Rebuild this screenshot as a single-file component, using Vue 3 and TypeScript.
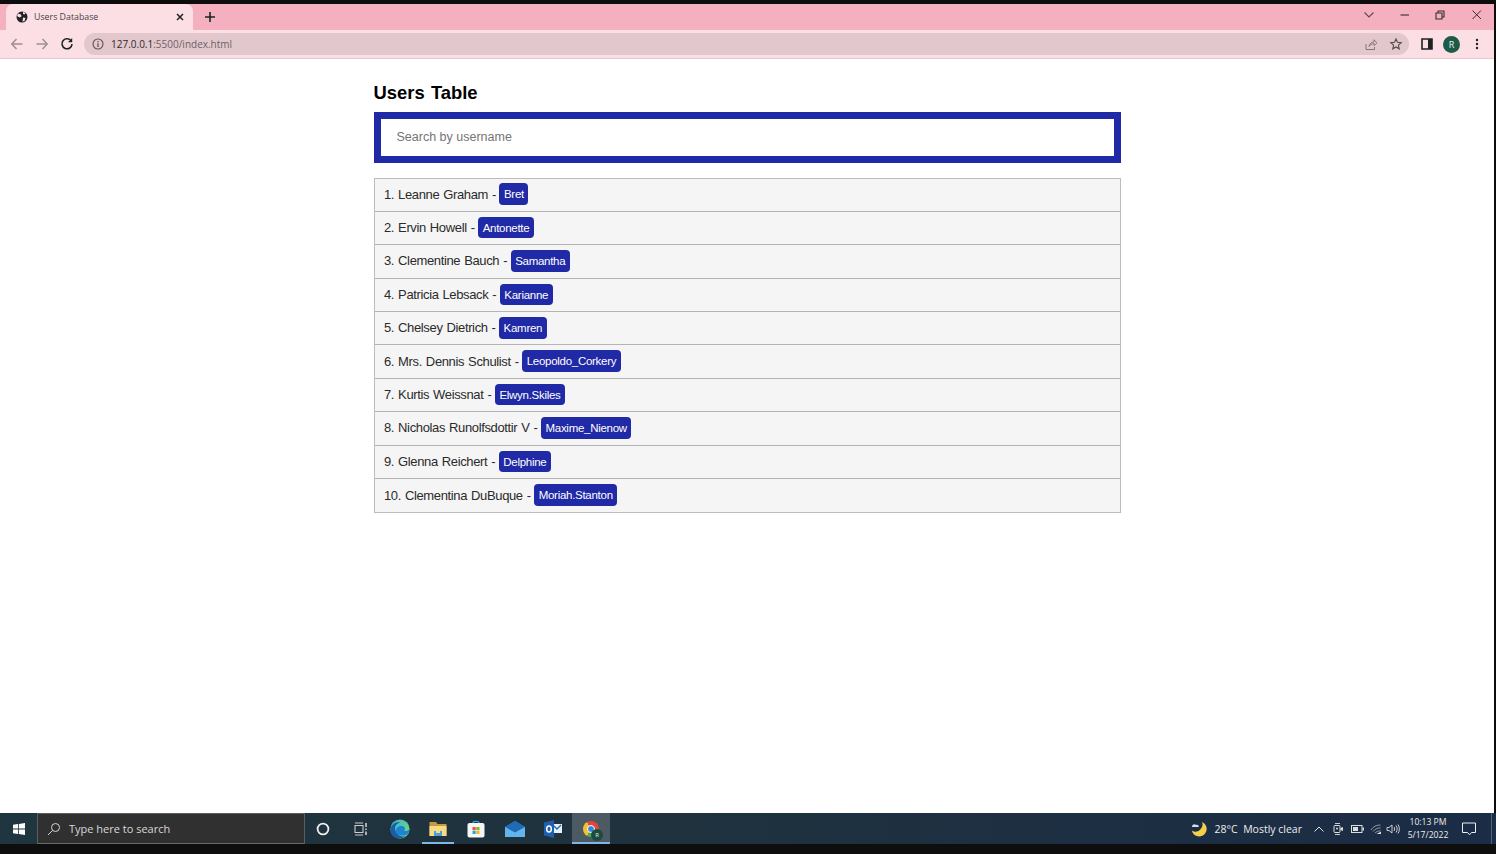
<script setup lang="ts">
interface User {
  name: string;
  username: string;
}

const users: User[] = [
  { name: "Leanne Graham", username: "Bret" },
  { name: "Ervin Howell", username: "Antonette" },
  { name: "Clementine Bauch", username: "Samantha" },
  { name: "Patricia Lebsack", username: "Karianne" },
  { name: "Chelsey Dietrich", username: "Kamren" },
  { name: "Mrs. Dennis Schulist", username: "Leopoldo_Corkery" },
  { name: "Kurtis Weissnat", username: "Elwyn.Skiles" },
  { name: "Nicholas Runolfsdottir V", username: "Maxime_Nienow" },
  { name: "Glenna Reichert", username: "Delphine" },
  { name: "Clementina DuBuque", username: "Moriah.Stanton" },
];
</script>

<template>
  <div class="screen">
    <div class="browser">
      <!-- tab strip -->
      <div class="tabstrip">
        <div class="tab">
          <svg class="globe" viewBox="0 0 12 12" width="12" height="12">
            <circle cx="6" cy="6" r="5.5" fill="#202124" />
            <path d="M2 2.5 5 3.5 5.5 5.5 3.5 6.5 1 5ZM7 6.5 9.5 7 8.5 10 6.5 10.5ZM7 1 9.5 2 8.5 3.5 7 3Z" fill="#fbdfe5" />
          </svg>
          <span class="tab-title">Users Database</span>
          <svg class="tab-close" viewBox="0 0 10 10" width="10" height="10">
            <path d="M2 2 8 8M8 2 2 8" stroke="#202124" stroke-width="1.5" />
          </svg>
        </div>
        <svg class="new-tab" viewBox="0 0 12 12" width="12" height="12">
          <path d="M6 1V11M1 6H11" stroke="#202124" stroke-width="1.6" />
        </svg>
        <div class="strip-space"></div>
        <svg class="win-icon chevron" viewBox="0 0 12 12" width="12" height="12">
          <path d="M1.5 3.5 6 8 10.5 3.5" fill="none" stroke="#5c4a50" stroke-width="1.1" />
        </svg>
        <svg class="win-icon minimize" viewBox="0 0 12 12" width="12" height="12">
          <path d="M1.5 6H10" stroke="#3a2c30" stroke-width="1.1" />
        </svg>
        <svg class="win-icon restore" viewBox="0 0 12 12" width="12" height="12">
          <path d="M2 4H8V10H2ZM4 4V2H10V8H8" fill="none" stroke="#3a2c30" stroke-width="1.1" />
        </svg>
        <svg class="win-icon win-close" viewBox="0 0 12 12" width="12" height="12">
          <path d="M1.5 1.5 10 10M10 1.5 1.5 10" stroke="#3a2c30" stroke-width="1" />
        </svg>
      </div>

      <!-- toolbar -->
      <div class="toolbar">
        <svg class="nav-icon back" viewBox="0 0 14 14" width="14" height="14">
          <path d="M12.5 7H2M6.5 2 1.8 7 6.5 12" fill="none" stroke="#a18f94" stroke-width="1.5" />
        </svg>
        <svg class="nav-icon forward" viewBox="0 0 14 14" width="14" height="14">
          <path d="M1.5 7H12M7.5 2 12.2 7 7.5 12" fill="none" stroke="#a18f94" stroke-width="1.5" />
        </svg>
        <svg class="nav-icon reload" viewBox="0 0 14 14" width="14" height="14">
          <path d="M11.3 4.2A5 5 0 1 0 12 7" fill="none" stroke="#202124" stroke-width="1.6" />
          <path d="M12.2 1V5.2H8Z" fill="#202124" />
        </svg>
        <div class="omnibox">
          <svg class="info" viewBox="0 0 12 12" width="12" height="12">
            <circle cx="6" cy="6" r="5" fill="none" stroke="#5c5054" stroke-width="1.1" />
            <path d="M6 5.2V9M6 3V4.2" stroke="#5c5054" stroke-width="1.2" />
          </svg>
          <span class="url"><span class="host">127.0.0.1</span>:5500/index.html</span>
          <div class="strip-space"></div>
          <svg class="share" viewBox="0 0 14 14" width="14" height="14">
            <path d="M2 7V12.5H10.5V10M5 9.5C5.5 6.5 7.5 5 10 5V2.8L13 5.8 10 8.6V6.7C8 6.7 6.3 7.5 5 9.5Z" fill="none" stroke="#85757a" stroke-width="1" />
          </svg>
          <svg class="star" viewBox="0 0 14 14" width="14" height="14">
            <path d="M7 2 8.5 5.3 12.2 5.7 9.4 8.200 10.200 11.800 7 10 3.800 11.800 4.600 8.200 1.800 5.700 5.500 5.300Z" fill="none" stroke="#55474c" stroke-width="1.1" />
          </svg>
        </div>
        <svg class="panel" viewBox="0 0 12 12" width="12" height="12">
          <path d="M1 1H11V11H1Z" fill="none" stroke="#202124" stroke-width="1.6" />
          <path d="M7 1H11V11H7Z" fill="#202124" />
        </svg>
        <div class="avatar">R</div>
        <svg class="kebab" viewBox="0 0 4 12" width="4" height="12">
          <circle cx="2" cy="2" r="1.2" fill="#202124" />
          <circle cx="2" cy="6" r="1.2" fill="#202124" />
          <circle cx="2" cy="10" r="1.2" fill="#202124" />
        </svg>
      </div>

      <!-- page -->
      <main class="page">
        <div class="container">
          <h1 class="title">Users Table</h1>
          <div class="search-wrap">
            <input class="search" type="text" placeholder="Search by username" />
          </div>
          <ul class="user-list">
            <li v-for="(user, i) in users" :key="user.username" class="user-row">
              <span>{{ i + 1 }}. {{ user.name }} -</span>
              <span class="badge">{{ user.username }}</span>
            </li>
          </ul>
        </div>
      </main>
    </div>

    <!-- windows taskbar -->
    <footer class="taskbar">
      <div class="start">
        <svg viewBox="0 0 12 12" width="12" height="12">
          <path d="M0 1.7 5 1V5.6H0ZM5.8 .9 12 0V5.6H5.8ZM0 6.4H5V11L0 10.3ZM5.8 6.4H12V12L5.8 11.1Z" fill="#fff" />
        </svg>
      </div>
      <div class="task-search">
        <svg viewBox="0 0 14 14" width="14" height="14">
          <circle cx="8.5" cy="5.5" r="4" fill="none" stroke="#d5d5d5" stroke-width="1" />
          <path d="M5.5 8.5 1 13" stroke="#d5d5d5" stroke-width="1" />
        </svg>
        <span>Type here to search</span>
      </div>
      <div class="task-icons">
        <div class="task-btn">
          <svg viewBox="0 0 14 14" width="14" height="14">
            <circle cx="7" cy="7" r="5.4" fill="none" stroke="#eee" stroke-width="1.8" />
          </svg>
        </div>
        <div class="task-btn">
          <svg viewBox="0 0 14 14" width="14" height="14">
            <path d="M1 3.5H9V10.5H1ZM1 1H9M1 13H9" fill="none" stroke="#ccc" stroke-width="1.1" />
            <path d="M12 1V5M12 6.5V8M12 9.5V13" stroke="#ccc" stroke-width="1.6" />
          </svg>
        </div>
        <div class="task-btn">
          <svg viewBox="0 0 20 20" width="20" height="20">
            <defs>
              <linearGradient id="edgeGreen" x1="0" y1="0" x2="1" y2="1">
                <stop offset="0" stop-color="#35b5d8" />
                <stop offset="1" stop-color="#7ddc6a" />
              </linearGradient>
            </defs>
            <circle cx="10" cy="10" r="9.6" fill="url(#edgeGreen)" />
            <path d="M.5 11C1 5 6 2.5 10 3.5 5 5 4 9 6 13 8 17 13 18.500 16 16.500 13 20 6.500 20.500 3 17 1 15 .4 13 .5 11Z" fill="#1a5ea8" />
            <path d="M6 12C6 8 9 6.500 12 7 15 7.500 16 10 14 12 16.500 12.500 19.500 11 19.500 10 19.500 13 17.500 16.500 13.500 16.500 9 16.500 6 15 6 12Z" fill="#1d83d4" />
          </svg>
        </div>
        <div class="task-btn running">
          <svg viewBox="0 0 18 16" width="18" height="16">
            <path d="M.5 1H7L8.500 3H17.500V15H.5Z" fill="#c99a3c" />
            <path d="M.5 5H17.500V15H.5Z" fill="#f7dc88" />
            <path d="M5 10H13V15H5Z" fill="#4f9fd8" />
            <path d="M7 10H11V12H7Z" fill="#f7dc88" />
          </svg>
        </div>
        <div class="task-btn">
          <svg viewBox="0 0 18 18" width="18" height="18">
            <path d="M6 4V2.500C6 1 12 1 12 2.500V4" fill="none" stroke="#3ca2dc" stroke-width="1.2" />
            <rect x="0.5" y="3" width="17" height="14.500" rx="2" fill="#f6f6f6" />
            <rect x="5.500" y="7" width="3.200" height="3.200" fill="#e8562a" />
            <rect x="9.300" y="7" width="3.200" height="3.200" fill="#7eba2a" />
            <rect x="5.500" y="10.800" width="3.200" height="3.200" fill="#2f9fe6" />
            <rect x="9.300" y="10.800" width="3.200" height="3.200" fill="#f7b51c" />
          </svg>
        </div>
        <div class="task-btn">
          <svg viewBox="0 0 20 16" width="20" height="16">
            <path d="M0 6 10 0 20 6V16H0Z" fill="#3d97dd" />
            <path d="M0 6 10 0 20 6 10 12Z" fill="#1f6cb5" />
            <path d="M0 6 10 11.500 20 6V16H0Z" fill="#62b4ee" />
          </svg>
        </div>
        <div class="task-btn">
          <svg viewBox="0 0 18 18" width="18" height="18">
            <path d="M8 4H18V13H8Z" fill="#e8f0fa" />
            <path d="M10 6 13 9 17 5" fill="none" stroke="#1f6cb5" stroke-width="1.400" />
            <path d="M0 2.500 10 0V18L0 15.500Z" fill="#1f5fb0" />
            <ellipse cx="5" cy="9" rx="2.300" ry="3" fill="none" stroke="#fff" stroke-width="1.500" />
          </svg>
        </div>
        <div class="task-btn running active">
          <div class="chrome">
            <span class="chrome-core"></span>
            <span class="chrome-badge">R</span>
          </div>
        </div>
      </div>
      <div class="strip-space"></div>
      <div class="tray">
        <svg class="moon" viewBox="0 0 16 16" width="16" height="16">
          <path d="M11 1A7.500 7.500 0 1 1 .8 9.500 7 7 0 0 0 11 1Z" fill="#f5cf4a" />
          <path d="M1 6H7.500C8.500 4.500 6.500 3 5 4 3.500 2.500 1 3.500 1 6Z" fill="#d6dde4" />
        </svg>
        <span class="weather">28°C&nbsp;&nbsp;Mostly clear</span>
        <svg class="tray-icon caret" viewBox="0 0 12 12" width="12" height="12">
          <path d="M1.500 8.500 6 4 10.500 8.500" fill="none" stroke="#e6e6e6" stroke-width="1" />
        </svg>
        <svg class="tray-icon mic" viewBox="0 0 12 14" width="12" height="14">
          <path d="M3 1.500H8M3 12.500H8" stroke="#ddd" stroke-width=".9" />
          <rect x="2" y="3.500" width="6" height="7" rx="1" fill="none" stroke="#ddd" stroke-width="1" />
          <circle cx="5" cy="6.500" r="1" fill="#ddd" />
          <path d="M8.500 6 11 5V9L8.500 8Z" fill="#ddd" />
        </svg>
        <svg class="tray-icon battery" viewBox="0 0 13 10" width="13" height="10">
          <rect x=".5" y="1.500" width="10.500" height="7" fill="none" stroke="#ddd" stroke-width="1" />
          <rect x="2" y="3" width="5" height="4" fill="#ddd" />
          <rect x="11.500" y="3.500" width="1.500" height="3" fill="#ddd" />
        </svg>
        <svg class="tray-icon wifi" viewBox="0 0 12 12" width="12" height="12">
          <path d="M1 7C3 3.500 6.500 2 10.500 2M3 8.500C4.500 6.500 7 5 10.500 4.800M5 10C6 9 8 7.800 10.500 7.800" fill="none" stroke="#9aa5ae" stroke-width=".9" />
          <path d="M6.500 11H11L11 8.500Z" fill="#ddd" />
        </svg>
        <svg class="tray-icon volume" viewBox="0 0 14 12" width="14" height="12">
          <path d="M1 4.500H3L6 2V10L3 7.500H1Z" fill="none" stroke="#ddd" stroke-width=".9" />
          <path d="M8 4C8.800 5 8.800 7 8 8M10 2.500C11.500 4.500 11.500 7.500 10 9.500M12 1.500C13.800 4 13.800 8 12 10.500" fill="none" stroke="#ddd" stroke-width=".9" />
        </svg>
        <div class="clock">
          <span>10:13 PM</span>
          <span>5/17/2022</span>
        </div>
        <svg class="notify" viewBox="0 0 14 14" width="14" height="14">
          <path d="M.5 1H13.500V10.500H9.500L7.500 12.800 5.500 10.500H.5Z" fill="none" stroke="#eee" stroke-width="1" />
        </svg>
        <span class="show-desktop"></span>
      </div>
    </footer>
    <div class="black-bottom"></div>
  </div>
</template>

<style scoped>
.screen {
  display: flex;
  flex-direction: column;
  height: 854px;
  background: #fff;
  font-family: "Liberation Sans", Arial, sans-serif;
  overflow: hidden;
}

.browser {
  flex: 1;
  display: flex;
  flex-direction: column;
  min-height: 0;
  border-top: 4px solid #0c0c0c;
  border-right: 2px solid #0c0c0c;
}

/* tab strip */
.tabstrip {
  height: 26px;
  display: flex;
  align-items: center;
  padding-left: 6px;
  background: #f4b0bf;
  flex-shrink: 0;
}

.tab {
  width: 187px;
  height: 26px;
  display: flex;
  align-items: center;
  padding: 0 8px 0 10px;
  box-sizing: border-box;
  background: #fbdfe5;
  border-radius: 7px 7px 0 0;
}

.globe {
  margin-right: 6px;
}

.tab-title {
  flex: 1;
  font-family: "Open Sans", sans-serif;
  font-size: 8.8px;
  color: #4b4145;
}

.new-tab {
  margin-left: 11px;
}

.strip-space {
  flex: 1;
}

.win-icon {
  margin-top: -4px;
}

.minimize {
  margin-left: 24px;
}

.restore {
  margin-left: 23px;
}

.win-close {
  margin: -4px 11px 0 25px;
}

/* toolbar */
.toolbar {
  height: 28px;
  display: flex;
  align-items: center;
  background: #fbdfe5;
  border-bottom: 1px solid #e8c6ce;
  padding-left: 10px;
  flex-shrink: 0;
}

.forward {
  margin-left: 11px;
}

.reload {
  margin-left: 11px;
}

.omnibox {
  width: 1325px;
  height: 22px;
  margin-left: 10px;
  display: flex;
  align-items: center;
  padding: 0 6px 0 8px;
  box-sizing: border-box;
  background: #e2c8cd;
  border-radius: 11px;
}

.url {
  margin-left: 7px;
  font-family: "Open Sans", sans-serif;
  font-size: 10px;
  color: #6e6166;
}

.host {
  color: #2e272a;
}

.star {
  margin-left: 11px;
}

.panel {
  margin-left: 12px;
}

.avatar {
  width: 17px;
  height: 17px;
  margin-left: 10px;
  border-radius: 50%;
  background: #1c5b49;
  color: #e8f0ec;
  font-family: "Open Sans", sans-serif;
  font-size: 9px;
  line-height: 17px;
  text-align: center;
}

.kebab {
  margin-left: 15px;
}

/* page */
.page {
  flex: 1;
  min-height: 0;
  padding: 21px 0 0 373.5px;
}

.container {
  width: 747px;
}

.title {
  margin: 0;
  height: 32px;
  font-size: 18.4px;
  line-height: 26px;
  font-weight: 700;
  word-spacing: 1.2px;
  color: #000;
}

.search-wrap {
  height: 51px;
  box-sizing: border-box;
  border: 7.5px solid #2029a6;
  background: #fff;
}

.search {
  display: block;
  width: 100%;
  height: 100%;
  box-sizing: border-box;
  border: 0;
  outline: 0;
  padding: 0 16px 2px;
  background: transparent;
  font-family: "Liberation Sans", Arial, sans-serif;
  font-size: 12.5px;
}

.search::placeholder {
  color: #757575;
}

.user-list {
  margin: 14.5px 0 0;
  padding: 0;
  list-style: none;
  border: 1px solid #bcbcbc;
  background: #f5f5f5;
}

.user-row {
  height: 33.4px;
  box-sizing: border-box;
  display: flex;
  align-items: center;
  gap: 3.5px;
  padding: 0 0 1px 9.5px;
  font-size: 13px;
  letter-spacing: -0.36px;
  word-spacing: 0.7px;
  color: #2b2b2b;
  border-bottom: 1px solid #b4b4b4;
}

.user-row:last-child {
  height: 33px;
  border-bottom: 0;
}

.badge {
  display: block;
  padding: 0 4.5px;
  height: 21.5px;
  line-height: 22px;
  border-radius: 4px;
  background: #2029a6;
  color: #fff;
  font-size: 11.5px;
  letter-spacing: -0.28px;
}

/* taskbar */
.taskbar {
  height: 31px;
  display: flex;
  align-items: stretch;
  background: linear-gradient(90deg, #1f3540 0, #1f323e 45%, #1b2c46 100%);
  flex-shrink: 0;
}

.start {
  width: 37px;
  display: flex;
  align-items: center;
  justify-content: center;
}

.task-search {
  width: 268px;
  box-sizing: border-box;
  display: flex;
  align-items: center;
  gap: 8px;
  padding-left: 9px;
  background: #303030;
  border: 1px solid #5c5c5c;
  border-bottom-color: #6a6a6a;
  font-family: "Open Sans", sans-serif;
  font-size: 11px;
  color: #d8d8d8;
}

.task-icons {
  display: flex;
  margin-left: -1px;
}

.task-btn {
  width: 38.3px;
  display: flex;
  align-items: center;
  justify-content: center;
  box-sizing: border-box;
  position: relative;
}

.task-btn.running::after {
  content: "";
  position: absolute;
  left: 3px;
  right: 3px;
  bottom: 0;
  height: 2px;
  background: #7db7e8;
}

.task-btn.active {
  background: #4c5a64;
}

.task-btn.active::after {
  left: 0;
  right: 0;
}

.chrome {
  position: relative;
  width: 16px;
  height: 16px;
  border-radius: 50%;
  background: conic-gradient(from -30deg, #e5443a 0 120deg, #4caf50 120deg 240deg, #f5c02d 240deg 360deg);
}

.chrome-core {
  position: absolute;
  left: 4px;
  top: 4px;
  width: 8px;
  height: 8px;
  box-sizing: border-box;
  border: 1.5px solid #fff;
  border-radius: 50%;
  background: #3b82d8;
}

.chrome-badge {
  position: absolute;
  right: -4px;
  bottom: -4px;
  width: 12px;
  height: 12px;
  border-radius: 50%;
  background: #1c4a3d;
  color: #dfe9e4;
  font-family: "Open Sans", sans-serif;
  font-size: 6px;
  line-height: 12px;
  text-align: center;
}

.tray {
  display: flex;
  align-items: center;
  color: #ececec;
  font-family: "Open Sans", sans-serif;
  font-size: 10.5px;
}

.moon {
  margin-right: 8px;
}

.caret {
  margin-left: 11px;
}

.mic {
  margin-left: 7px;
}

.battery {
  margin-left: 7px;
}

.wifi {
  margin-left: 6px;
}

.volume {
  margin-left: 4px;
}

.clock {
  display: flex;
  flex-direction: column;
  align-items: center;
  width: 52px;
  margin-left: 2px;
  font-size: 8.6px;
  line-height: 13px;
}

.notify {
  margin-left: 8px;
}

.show-desktop {
  width: 1px;
  height: 100%;
  margin-left: 15px;
  margin-right: 4px;
  background: #56646e;
}

.black-bottom {
  height: 10px;
  background: #0e0e0e;
  flex-shrink: 0;
}
</style>
